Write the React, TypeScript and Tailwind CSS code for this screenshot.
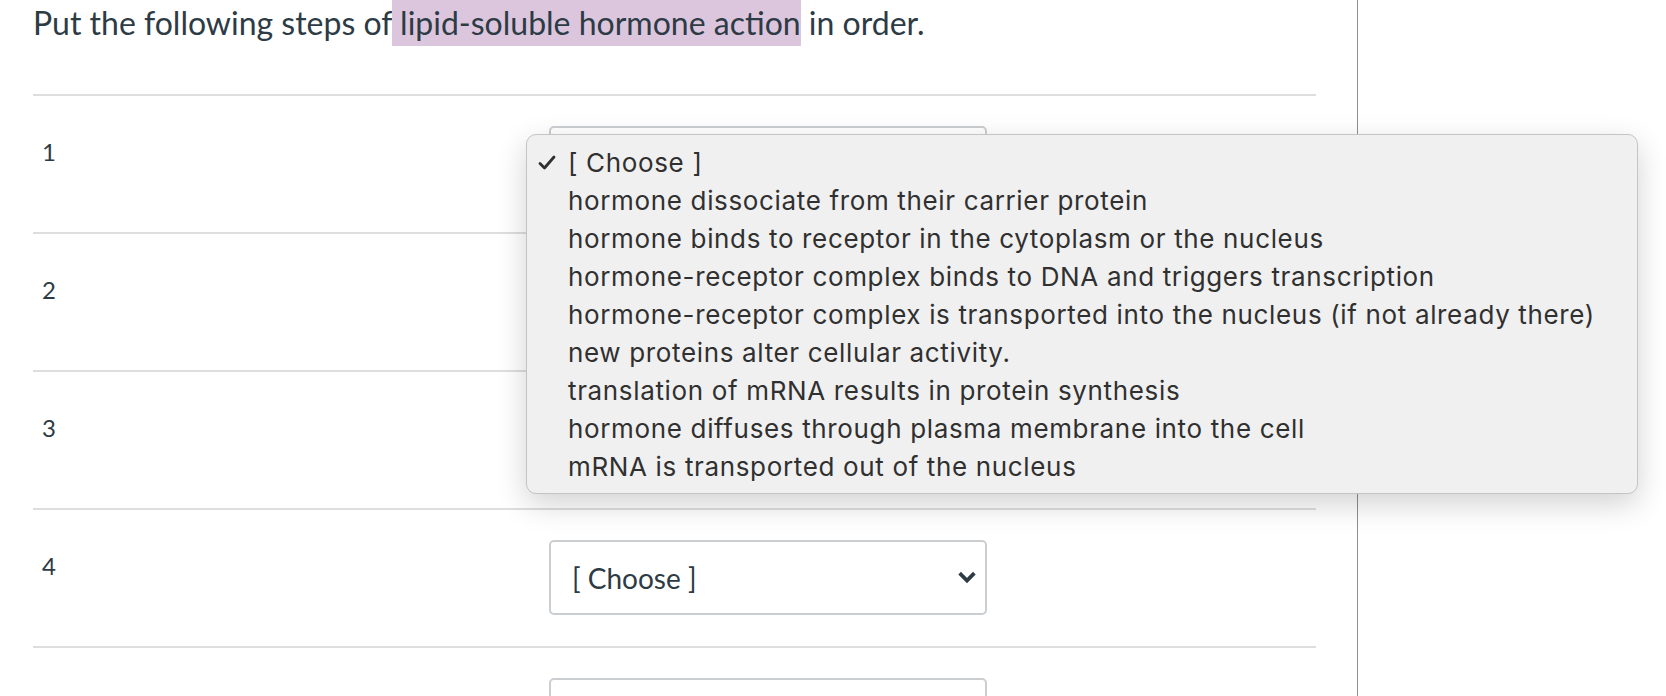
import React from "react";

const steps = [
  "hormone dissociate from their carrier protein",
  "hormone binds to receptor in the cytoplasm or the nucleus",
  "hormone-receptor complex binds to DNA and triggers transcription",
  "hormone-receptor complex is transported into the nucleus (if not already there)",
  "new proteins alter cellular activity.",
  "translation of mRNA results in protein synthesis",
  "hormone diffuses through plasma membrane into the cell",
  "mRNA is transported out of the nucleus",
];

function Chevron() {
  return (
    <svg width="20" height="14" viewBox="0 0 20 14" className="shrink-0">
      <polyline
        points="4,3.5 10,9.5 16,3.5"
        fill="none"
        stroke="#2d3b45"
        strokeWidth="3.8"
        strokeLinecap="square"
      />
    </svg>
  );
}

function FakeSelect() {
  return (
    <div className="flex h-[75px] w-[438px] items-center justify-between rounded-[5px] border-2 border-[#cbced1] bg-white pl-[21px] pr-[8px]">
      <span className="text-[28px] text-[#2d3b45]">[ Choose ]</span>
      <Chevron />
    </div>
  );
}

function Row({ n }: { n: number }) {
  return (
    <>
      <div className="flex h-[136px] items-start">
        <div className="w-[516px] pl-[9px] pt-[38px] text-[24px] text-[#2d3b45]">{n}</div>
        <div className="pt-[30px]">
          <FakeSelect />
        </div>
      </div>
      <div className="h-[2px] bg-[#dcdee0]" />
    </>
  );
}

function ChoicePopup() {
  return (
    <div className="absolute left-[526px] top-[134px] w-[1112px] rounded-[10px] border border-[#c4c4c4] bg-[#f0f0f0] py-[8px] shadow-[0_10px_30px_rgba(0,0,0,0.18)] [font-family:Inter,'Noto_Sans',sans-serif]">
      <div className="flex h-[38px] items-center">
        <div className="flex w-[41px] justify-end pr-[12px]">
          <svg width="18" height="15" viewBox="0 0 18 15">
            <polyline
              points="2,8.5 6.5,13 16,2"
              fill="none"
              stroke="#303030"
              strokeWidth="2.8"
              strokeLinejoin="round"
              strokeLinecap="round"
            />
          </svg>
        </div>
        <span className="text-[26px] tracking-[0.025em] text-[#303030]">[ Choose ]</span>
      </div>
      {steps.map((s) => (
        <div
          key={s}
          className="flex h-[38px] items-center pl-[41px] text-[26px] tracking-[0.025em] text-[#303030]"
        >
          {s}
        </div>
      ))}
    </div>
  );
}

export default function App() {
  return (
    <div className="relative h-[696px] w-[1666px] overflow-hidden bg-white [font-family:Lato,'Noto_Sans',sans-serif]">
      <div className="h-[696px] w-[1358px] border-r border-[#8f8f8f]">
        <div className="w-[1316px] pl-[33px]">
          <div className="h-[94px]">
            <p className="text-[32px] leading-[46px] text-[#2d3b45]">
              Put the following steps of
              <span className="bg-[#dcc6dd] py-[4px]"> lipid-soluble hormone action</span> in order.
            </p>
          </div>
          <div className="h-[2px] bg-[#dcdee0]" />
          {[1, 2, 3, 4, 5].map((n) => (
            <Row key={n} n={n} />
          ))}
        </div>
      </div>
      <ChoicePopup />
    </div>
  );
}
